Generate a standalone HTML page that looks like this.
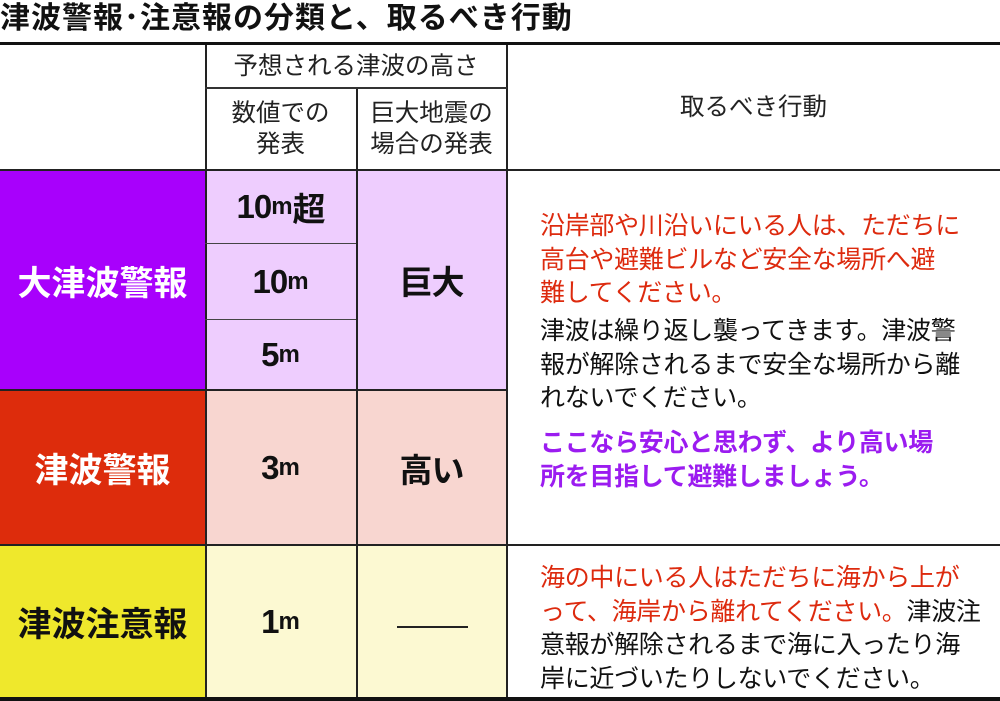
<!DOCTYPE html>
<html><head><meta charset="utf-8"><style>
body{margin:0;width:1000px;height:701px;position:relative;background:#fff;font-family:"Liberation Sans","Noto Sans CJK JP",sans-serif;overflow:hidden;color:#111}
.a{position:absolute;box-sizing:border-box}
.c{display:flex;align-items:center;justify-content:center;text-align:center}
.h{font-size:24.5px;line-height:31px;color:#222}
.big{font-size:33px;font-weight:bold;color:#111;letter-spacing:-1px}
.big small{font-size:24px;letter-spacing:0}
.lab{font-size:34px;font-weight:bold}
.t{position:absolute;left:540px;font-size:25px;line-height:33.5px;white-space:nowrap;letter-spacing:-0.3px}
.r{color:#dd2a0e}.p{color:#9b1cf0;font-weight:bold}
</style></head><body>
<div class="a" style="left:0;top:1px;font-size:30px;font-weight:bold;line-height:36px;white-space:nowrap;letter-spacing:1px">津波警報･注意報の分類と、取るべき行動</div>
<div class="a" style="left:0;top:42px;width:1000px;height:3px;background:#111"></div>
<div class="a c h" style="left:205px;top:45px;width:302px;height:43px">予想される津波の高さ</div>
<div class="a c h" style="left:205px;top:88px;width:151px;height:82px">数値での<br>発表</div>
<div class="a c h" style="left:356px;top:88px;width:151px;height:82px">巨大地震の<br>場合の発表</div>
<div class="a c h" style="left:507px;top:45px;width:493px;height:125px">取るべき行動</div>
<div class="a c lab" style="left:0;top:170px;width:205px;height:220px;background:#a800fc;color:#fff">大津波警報</div>
<div class="a c big" style="left:205px;top:170px;width:151px;height:74px;background:#eecdfe">10<small>m</small>超</div>
<div class="a c big" style="left:205px;top:244px;width:151px;height:76px;background:#eecdfe">10<small>m</small></div>
<div class="a c big" style="left:205px;top:320px;width:151px;height:70px;background:#eecdfe">5<small>m</small></div>
<div class="a c big" style="left:356px;top:170px;width:151px;height:220px;background:#eecdfe">巨大</div>
<div class="a c lab" style="left:0;top:390px;width:205px;height:155px;background:#dd2c0c;color:#fff">津波警報</div>
<div class="a c big" style="left:205px;top:390px;width:151px;height:155px;background:#f8d6d0">3<small>m</small></div>
<div class="a c big" style="left:356px;top:390px;width:151px;height:155px;background:#f8d6d0">高い</div>
<div class="a c lab" style="left:0;top:545px;width:205px;height:153px;background:#efe82c;color:#111">津波注意報</div>
<div class="a c big" style="left:205px;top:545px;width:151px;height:153px;background:#fcf9d2">1<small>m</small></div>
<div class="a" style="left:356px;top:545px;width:151px;height:153px;background:#fcf9d2"></div>
<div class="a" style="left:397px;top:626px;width:71px;height:2px;background:#222"></div>
<div class="a" style="left:205px;top:45px;width:2px;height:653px;background:#222"></div>
<div class="a" style="left:356px;top:88px;width:2px;height:610px;background:#222"></div>
<div class="a" style="left:506px;top:45px;width:2px;height:653px;background:#222"></div>
<div class="a" style="left:205px;top:87px;width:302px;height:2px;background:#333"></div>
<div class="a" style="left:0;top:169px;width:1000px;height:2px;background:#222"></div>
<div class="a" style="left:205px;top:243px;width:151px;height:1px;background:#444"></div>
<div class="a" style="left:205px;top:319px;width:151px;height:1px;background:#444"></div>
<div class="a" style="left:0;top:389px;width:507px;height:2px;background:#222"></div>
<div class="a" style="left:0;top:544px;width:1000px;height:2px;background:#222"></div>
<div class="a" style="left:0;top:697px;width:1000px;height:4px;background:#111"></div>
<div class="t r" style="top:210px">沿岸部や川沿いにいる人は、ただちに<br>高台や避難ビルなど安全な場所へ避<br>難してください。</div>
<div class="t" style="top:315px">津波は繰り返し襲ってきます。津波警<br>報が解除されるまで安全な場所から離<br>れないでください。</div>
<div class="t p" style="top:427px">ここなら安心と思わず、より高い場<br>所を目指して避難しましょう。</div>
<div class="t" style="top:562px"><span class="r">海の中にいる人はただちに海から上が<br>って、海岸から離れてください。</span>津波注<br>意報が解除されるまで海に入ったり海<br>岸に近づいたりしないでください。</div>
</body></html>
